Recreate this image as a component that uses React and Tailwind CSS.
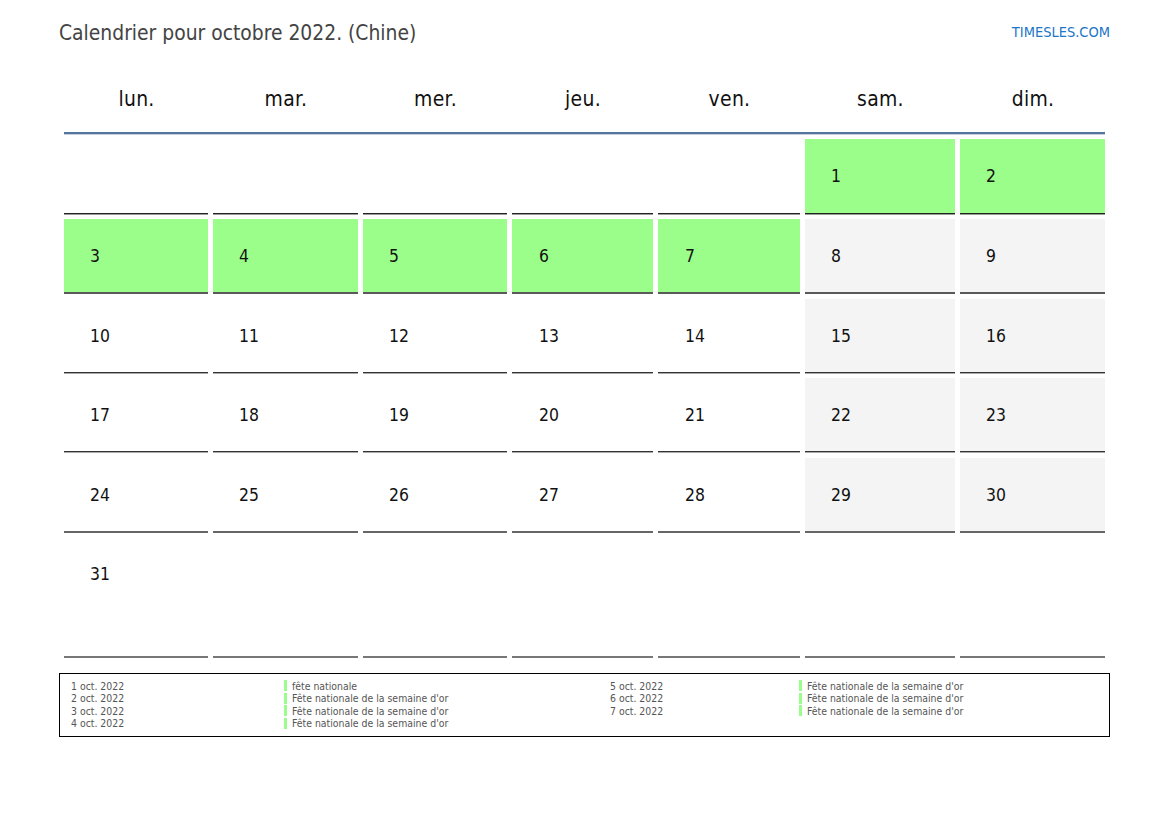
import React from 'react';

const weekDays = ['lun.', 'mar.', 'mer.', 'jeu.', 'ven.', 'sam.', 'dim.'];

const weeks = [
  ['', '', '', '', '', '1', '2'],
  ['3', '4', '5', '6', '7', '8', '9'],
  ['10', '11', '12', '13', '14', '15', '16'],
  ['17', '18', '19', '20', '21', '22', '23'],
  ['24', '25', '26', '27', '28', '29', '30'],
  ['31', '', '', '', '', '', ''],
];

const rowStyles = [
  'h-[76px] mb-[4px]',
  'h-[75px] mb-[5px]',
  'h-[75px] mb-[4px]',
  'h-[75px] mb-[5px]',
  'h-[75px] mb-[4px]',
  'h-[121px]',
];
const rowBorders = [
  'border-b border-[#9a9a9a] shadow-[inset_0_-1px_0_#222222]',
  'border-b-[2px] border-[#5a5a5a]',
  'border-b border-[#aaaaaa] shadow-[inset_0_-1px_0_#333333]',
  'border-b border-[#aaaaaa] shadow-[inset_0_-1px_0_#333333]',
  'border-b-[2px] border-[#666666]',
  'border-b-[2px] border-[#777777]',
];
const cellPadding = ['pl-[26px]', 'pl-[26px]', 'pl-[26px]', 'pl-[27px]', 'pl-[27px]', 'pl-[26px]', 'pl-[26px]'];
const holidays = ['1', '2', '3', '4', '5', '6', '7'];

const leftLegend = [
  ['1 oct. 2022', 'fête nationale'],
  ['2 oct. 2022', "Fête nationale de la semaine d'or"],
  ['3 oct. 2022', "Fête nationale de la semaine d'or"],
  ['4 oct. 2022', "Fête nationale de la semaine d'or"],
];

const rightLegend = [
  ['5 oct. 2022', "Fête nationale de la semaine d'or"],
  ['6 oct. 2022', "Fête nationale de la semaine d'or"],
  ['7 oct. 2022', "Fête nationale de la semaine d'or"],
];

const columns = 'grid grid-cols-[144px_145px_144px_141px_142px_150px_145px] gap-x-[5px]';

const getCellColor = (day, index) => {
  if (holidays.includes(day)) return 'bg-[#9bfd8a]';
  if (day && index >= 5) return 'bg-[#f4f4f4]';
  return 'bg-white';
};

const LegendColumn = ({ items, dateWidth, className }) => (
  <div className={className}>
    {items.map(([date, label]) => (
      <div key={date} className="flex h-[12.5px] items-center">
        <div className={dateWidth}>{date}</div>
        <div className="flex h-[12px] items-center">
          <span className="h-[11px] w-[3px] bg-[#9bfd8a]" />
          <span className="ml-[5px]">{label}</span>
        </div>
      </div>
    ))}
  </div>
);

const App = () => {
  return (
    <div className="h-[827px] w-[1169px] overflow-hidden bg-white font-['DejaVu_Sans_Condensed','DejaVu_Sans',sans-serif]">
      <div className="flex items-start justify-between pl-[59px] pr-[59px] pt-[20px]">
        <h1 className="text-[20.85px] leading-[26px] text-[#444444]">Calendrier pour octobre 2022. (Chine)</h1>
        <div className="pt-[3px] text-[14.5px] leading-[18px] text-[#2176c7]">TIMESLES.COM</div>
      </div>

      <div className="ml-[64px] w-[1041px]">
        <div className={`${columns} mt-[20px] h-[68px] border-b-[2px] border-[#5474a0] shadow-[0_1px_0_#c5d0e0]`}>
          {weekDays.map((day) => (
            <div key={day} className="pl-[1px] pt-[20px] text-center text-[20.9px] leading-[26px] tracking-[0.3px] text-[#111111]">
              {day}
            </div>
          ))}
        </div>

        <div className="mt-[5px]">
          {weeks.map((week, rowIndex) => (
            <div key={rowIndex} className={`${columns} ${rowStyles[rowIndex]}`}>
              {week.map((day, index) => (
                <div
                  key={index}
                  className={`${rowBorders[rowIndex]} ${cellPadding[index]} pt-[26px] text-[17.4px] leading-[22px] text-[#111111] ${getCellColor(day, index)}`}
                >
                  {day}
                </div>
              ))}
            </div>
          ))}
        </div>
      </div>

      <div className="ml-[59px] mt-[15px] flex h-[64px] w-[1051px] border border-black pl-[11px] pt-[5.5px] text-[10.4px] leading-[12px] text-[#555555]">
        <LegendColumn items={leftLegend} dateWidth="w-[213px]" className="w-[539px]" />
        <LegendColumn items={rightLegend} dateWidth="w-[189px]" />
      </div>
    </div>
  );
};

export default App;
